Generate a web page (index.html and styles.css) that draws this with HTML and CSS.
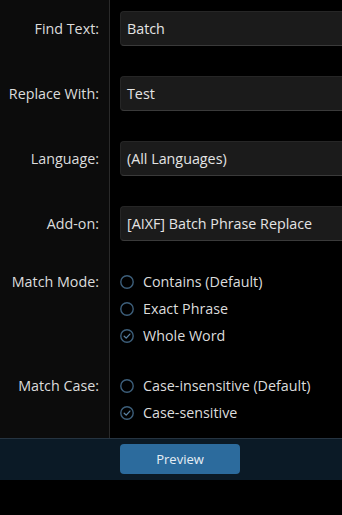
FILE: index.html
```html
<!DOCTYPE html>
<html>
<head>
<meta charset="utf-8">
<link rel="stylesheet" href="styles.css">
</head>
<body>
<div class="page">
  <div class="form">
    <div class="row row-input">
      <div class="label">Find Text:</div>
      <div class="control"><div class="input">Batch</div></div>
    </div>
    <div class="row row-input">
      <div class="label">Replace With:</div>
      <div class="control"><div class="input">Test</div></div>
    </div>
    <div class="row row-input">
      <div class="label">Language:</div>
      <div class="control"><div class="input">(All Languages)</div></div>
    </div>
    <div class="row row-input">
      <div class="label">Add-on:</div>
      <div class="control"><div class="input">[AIXF] Batch Phrase Replace</div></div>
    </div>
    <div class="row row-group first-group">
      <div class="label">Match Mode:</div>
      <div class="control radios">
        <div class="radio"><svg class="ico" width="14" height="14" viewBox="0 0 14 14"><circle cx="7" cy="7" r="6.2" fill="none" stroke="#3d5f7b" stroke-width="1.4"/></svg><span>Contains (Default)</span></div>
        <div class="radio"><svg class="ico" width="14" height="14" viewBox="0 0 14 14"><circle cx="7" cy="7" r="6.2" fill="none" stroke="#3d5f7b" stroke-width="1.4"/></svg><span>Exact Phrase</span></div>
        <div class="radio"><svg class="ico" width="14" height="14" viewBox="0 0 14 14"><circle cx="7" cy="7" r="6.2" fill="none" stroke="#3d5f7b" stroke-width="1.4"/><path d="M4.2 7.2 L6.2 9.1 L9.9 5.1" fill="none" stroke="#5a82a3" stroke-width="1.3" stroke-linecap="round" stroke-linejoin="round"/></svg><span>Whole Word</span></div>
      </div>
    </div>
    <div class="row row-group second-group">
      <div class="label">Match Case:</div>
      <div class="control radios">
        <div class="radio"><svg class="ico" width="14" height="14" viewBox="0 0 14 14"><circle cx="7" cy="7" r="6.2" fill="none" stroke="#3d5f7b" stroke-width="1.4"/></svg><span>Case-insensitive (Default)</span></div>
        <div class="radio"><svg class="ico" width="14" height="14" viewBox="0 0 14 14"><circle cx="7" cy="7" r="6.2" fill="none" stroke="#3d5f7b" stroke-width="1.4"/><path d="M4.2 7.2 L6.2 9.1 L9.9 5.1" fill="none" stroke="#5a82a3" stroke-width="1.3" stroke-linecap="round" stroke-linejoin="round"/></svg><span>Case-sensitive</span></div>
      </div>
    </div>
  </div>
  <div class="footer">
    <div class="button">Preview</div>
  </div>
</div>
</body>
</html>
```

FILE: styles.css
```css
html, body {
  margin: 0;
  padding: 0;
  background: #000;
}
body {
  width: 342px;
  height: 515px;
  overflow: hidden;
  font-family: "Open Sans", "Noto Sans", sans-serif;
  font-size: 14.3px;
  color: #dcdcdc;
}
.page {
  display: flex;
  flex-direction: column;
}
.form {
  display: flex;
  flex-direction: column;
  padding: 11px 0 12px;
  background: linear-gradient(to right, #0c0c0c 0, #0c0c0c 109px, #2a2a2a 109px, #2a2a2a 110px, #000 110px);
}
.row {
  display: grid;
  grid-template-columns: 110px 1fr;
}
.row-input + .row-input {
  margin-top: 30px;
}
.row-input {
  align-items: center;
}
.first-group {
  margin-top: 27px;
}
.second-group {
  margin-top: 23px;
}
.label {
  text-align: right;
  padding-right: 11px;
  white-space: nowrap;
}
.row-group .label {
  line-height: 27px;
}
.control {
  padding-left: 10px;
  min-width: 0;
  overflow: hidden;
}
.input {
  box-sizing: border-box;
  width: 100%;
  height: 35px;
  line-height: 33px;
  padding-left: 6px;
  background: #1b1b1b;
  border: 1px solid #262626;
  border-right: none;
  border-bottom-color: #3a3a3a;
  border-radius: 4px 0 0 4px;
  color: #e4e4e4;
  white-space: nowrap;
  overflow: hidden;
}
.radios {
  display: flex;
  flex-direction: column;
}
.radio {
  display: flex;
  align-items: center;
  height: 27px;
  gap: 9px;
  white-space: nowrap;
}
.ico {
  flex: none;
}
.footer {
  border-top: 1px solid #263441;
  background: #0b1a26;
  padding: 5px 0 6px 120px;
}
.button {
  width: 120px;
  height: 30px;
  line-height: 30px;
  text-align: center;
  background: #2c6b9d;
  border-radius: 4px;
  color: #e6eef5;
  font-size: 13px;
}
```
